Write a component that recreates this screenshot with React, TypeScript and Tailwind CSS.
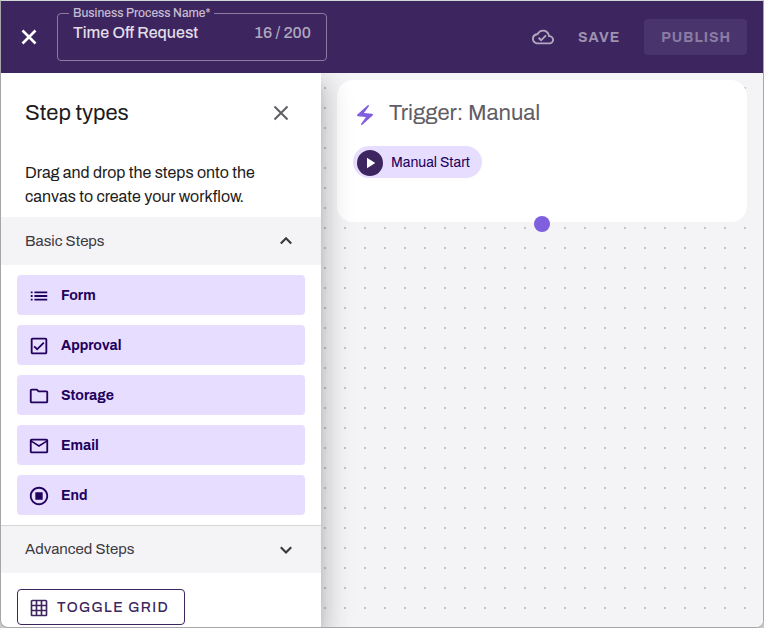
import { useState } from 'react'
import type { IconType } from 'react-icons'
import {
  MdElectricBolt,
  MdList,
  MdOutlineCheckBox,
  MdOutlineCloudDone,
  MdOutlineEmail,
  MdOutlineFolder,
  MdOutlineGridOn,
  MdOutlineStopCircle,
  MdPlayArrow,
} from 'react-icons/md'

interface StepType {
  name: string
  icon: IconType
}

const basicSteps: StepType[] = [
  { name: 'Form', icon: MdList },
  { name: 'Approval', icon: MdOutlineCheckBox },
  { name: 'Storage', icon: MdOutlineFolder },
  { name: 'Email', icon: MdOutlineEmail },
  { name: 'End', icon: MdOutlineStopCircle },
]

const MAX_NAME_LENGTH = 200

function CloseIcon({ strokeWidth }: { strokeWidth: number }) {
  return (
    <svg
      width="24"
      height="24"
      viewBox="0 0 24 24"
      fill="none"
      stroke="currentColor"
      strokeWidth={strokeWidth}
      aria-hidden="true"
    >
      <path d="m5.5 5.5 13 13M18.5 5.5l-13 13" />
    </svg>
  )
}

function Chevron({ open }: { open: boolean }) {
  return (
    <svg
      width="24"
      height="24"
      viewBox="0 0 24 24"
      fill="none"
      stroke="currentColor"
      strokeWidth="2.2"
      aria-hidden="true"
    >
      <path d={open ? 'm6.8 14.5 5.2-5.2 5.2 5.2' : 'm6.8 9.3 5.2 5.2 5.2-5.2'} />
    </svg>
  )
}

function TopBar() {
  const [name, setName] = useState('Time Off Request')

  return (
    <header className="relative z-20 flex h-18 shrink-0 items-center bg-[#3d2560] px-4">
      <button type="button" aria-label="Close editor" className="text-white">
        <CloseIcon strokeWidth={2.6} />
      </button>
      <fieldset className="-mt-1.5 ml-4 h-[54px] w-[270px] rounded border border-[#8b7c9f] pl-[11px]">
        <legend className="px-1 text-xs leading-3 font-medium text-[#c5bdcf]">
          <label htmlFor="process-name">Business Process Name*</label>
        </legend>
        <div className="flex items-center pt-0.5 pr-[15px]">
          <input
            id="process-name"
            type="text"
            maxLength={MAX_NAME_LENGTH}
            value={name}
            onChange={(e) => setName(e.target.value)}
            className="min-w-0 flex-1 bg-transparent pl-1 text-base font-medium text-[#e2dee7] outline-none"
          />
          <span className="text-base font-medium text-[#b1a8bf]">
            {name.length} / {MAX_NAME_LENGTH}
          </span>
        </div>
      </fieldset>
      <div className="ml-auto flex items-center">
        <MdOutlineCloudDone size={22} className="text-[#b1a8bf]" />
        <button
          type="button"
          className="px-6 pt-px text-sm font-bold tracking-[1px] text-[#9e92b0]"
        >
          SAVE
        </button>
        <button
          type="button"
          className="h-9 rounded bg-[#4a346c] pt-px pr-4 pl-[17px] text-sm font-bold tracking-[1px] text-[#8b7ca4]"
        >
          PUBLISH
        </button>
      </div>
    </header>
  )
}

function StepCard({ name, icon: Icon }: StepType) {
  return (
    <li>
      <button
        type="button"
        draggable
        className="flex h-10 w-full items-center gap-[11px] rounded bg-[#e7deff] pt-px pl-[11px] text-sm font-bold text-[#22005d]"
      >
        <Icon size={22} />
        {name}
      </button>
    </li>
  )
}

function StepsPanel() {
  const [basicOpen, setBasicOpen] = useState(true)

  return (
    <aside className="relative z-10 flex w-80 shrink-0 flex-col bg-white shadow-[0_8px_10px_-5px_rgba(0,0,0,0.2),0_16px_24px_2px_rgba(0,0,0,0.14),0_6px_30px_5px_rgba(0,0,0,0.12)]">
      <div className="flex h-20 items-center justify-between px-6">
        <h2 className="text-[22px] text-[#1d1b20]">Step types</h2>
        <button type="button" aria-label="Close panel" className="mr-1 text-[#605d66]">
          <CloseIcon strokeWidth={2} />
        </button>
      </div>
      <p className="px-6 pt-2 pb-2 text-base text-[#1d1b20]">
        Drag and drop the steps onto the canvas to create your workflow.
      </p>
      <button
        type="button"
        aria-expanded={basicOpen}
        onClick={() => setBasicOpen(!basicOpen)}
        className="flex h-12 items-center justify-between bg-[#f4f4f7] pr-[23px] pl-6 text-[15px] text-[#3b383e]"
      >
        Basic Steps
        <Chevron open={basicOpen} />
      </button>
      {basicOpen && (
        <ul className="flex flex-col gap-2.5 px-4 py-2.5">
          {basicSteps.map((step) => (
            <StepCard key={step.name} {...step} />
          ))}
        </ul>
      )}
      <button
        type="button"
        aria-expanded={false}
        className="flex h-12 items-center justify-between border-t border-[#d5d5d8] bg-[#f4f4f7] pr-[23px] pl-6 text-[15px] text-[#3b383e]"
      >
        Advanced Steps
        <Chevron open={false} />
      </button>
      <div className="px-4 pt-4">
        <button
          type="button"
          className="flex h-9 items-center gap-2 rounded border border-[#3d2560] pt-px pr-[15px] pl-[11px] text-sm font-medium tracking-[1.4px] text-[#3d2560]"
        >
          <MdOutlineGridOn size={20} />
          TOGGLE GRID
        </button>
      </div>
    </aside>
  )
}

function TriggerCard() {
  return (
    <section className="relative h-[142px] rounded-2xl bg-white p-4">
      <div className="flex h-[34px] items-center gap-3 text-[#605d66]">
        <MdElectricBolt size={24} className="mt-1 text-[#7f5fdd]" />
        <h1 className="text-[22px]">Trigger: Manual</h1>
      </div>
      <button
        type="button"
        className="mt-4 flex h-8 items-center gap-2 rounded-full bg-[#e7deff] pt-px pr-3 pl-1 text-sm text-[#22005d]"
      >
        <span className="flex size-[26px] items-center justify-center rounded-full bg-[#3d2560] text-white">
          <MdPlayArrow size={18} />
        </span>
        Manual Start
      </button>
      <span className="absolute -bottom-2.5 left-1/2 size-4 -translate-x-1/2 rounded-full bg-[#7f5fdd]" />
    </section>
  )
}

export default function App() {
  return (
    <div className="min-h-screen bg-[#c9c9c9] font-['Archivo','Liberation_Sans',sans-serif]">
      <div className="flex h-screen flex-col overflow-hidden rounded-b-lg border border-[#a6a6a8] border-t-[#d0d8d8]">
        <TopBar />
        <div className="flex min-h-0 flex-1">
          <StepsPanel />
          <main className="flex-1 bg-[#f4f4f7] bg-[linear-gradient(#f4f4f7_18px,transparent_18px),linear-gradient(90deg,#f4f4f7_18px,#c4c4c8_18px)] bg-size-[20px_20px] bg-position-[5px_-4px] px-4 pt-[7px]">
            <TriggerCard />
          </main>
        </div>
      </div>
    </div>
  )
}
